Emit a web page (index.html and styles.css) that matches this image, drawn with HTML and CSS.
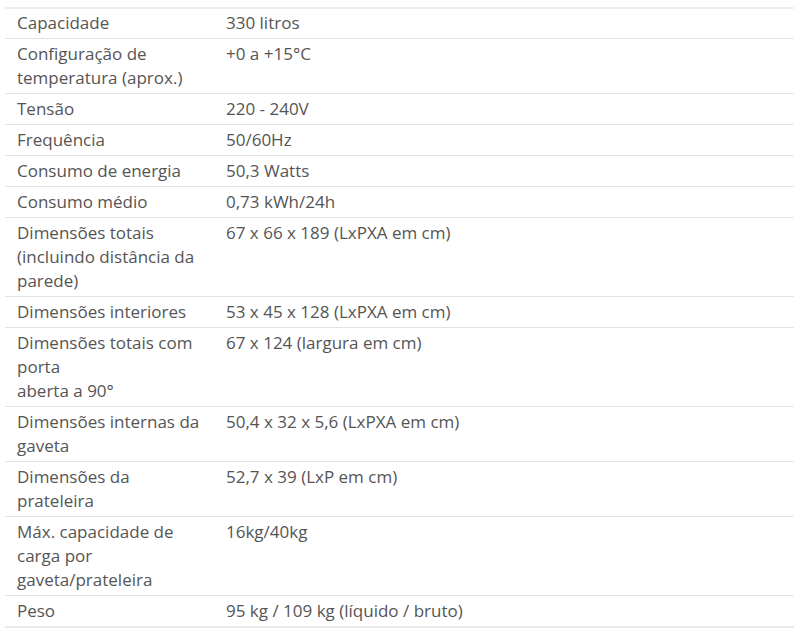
FILE: index.html
```html
<!DOCTYPE html>
<html lang="pt">
<head>
<meta charset="utf-8">
<link rel="stylesheet" href="styles.css">
</head>
<body>
<table class="specs">
<tbody>
<tr><td class="k">Capacidade</td><td class="v">330 litros</td></tr>
<tr><td class="k">Configuração de temperatura (aprox.)</td><td class="v">+0 a +15°C</td></tr>
<tr><td class="k">Tensão</td><td class="v">220 - 240V</td></tr>
<tr><td class="k">Frequência</td><td class="v">50/60Hz</td></tr>
<tr><td class="k">Consumo de energia</td><td class="v">50,3 Watts</td></tr>
<tr><td class="k">Consumo médio</td><td class="v">0,73 kWh/24h</td></tr>
<tr><td class="k">Dimensões totais (incluindo distância da parede)</td><td class="v">67 x 66 x 189 (LxPXA em cm)</td></tr>
<tr><td class="k">Dimensões interiores</td><td class="v">53 x 45 x 128 (LxPXA em cm)</td></tr>
<tr><td class="k">Dimensões totais com porta<br>aberta a 90°</td><td class="v">67 x 124 (largura em cm)</td></tr>
<tr><td class="k">Dimensões internas da gaveta</td><td class="v">50,4 x 32 x 5,6 (LxPXA em cm)</td></tr>
<tr><td class="k">Dimensões da prateleira</td><td class="v">52,7 x 39 (LxP em cm)</td></tr>
<tr><td class="k">Máx. capacidade de carga por gaveta/prateleira</td><td class="v">16kg/40kg</td></tr>
<tr><td class="k">Peso</td><td class="v">95 kg / 109 kg (líquido / bruto)</td></tr>
</tbody>
</table>
</body>
</html>
```
FILE: styles.css
```css
html, body {
  margin: 0;
  padding: 0;
  background: #fff;
}
body {
  font-family: "Open Sans", "Liberation Sans", sans-serif;
  font-size: 17px;
  line-height: 24px;
  color: #555;
}
.specs {
  border-collapse: collapse;
  width: 789px;
  margin: 7px 0 0 5px;
  border-top: 2px solid #eeeeee;
  border-bottom: 2px solid #e9e9e9;
}
.specs td {
  padding: 3px 12px;
  vertical-align: top;
  border-top: 1px solid #e2e2e2;
  text-align: left;
}
.specs tr:first-child td {
  border-top: 2px solid #eeeeee;
  padding-top: 2px;
}
.specs .k {
  width: 185px;
}
```
